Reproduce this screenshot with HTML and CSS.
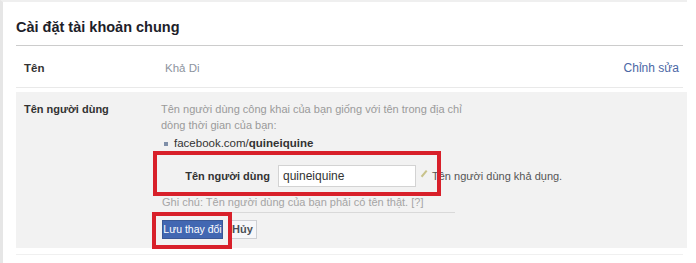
FILE: index.html
```html
<!DOCTYPE html>
<html>
<head>
    <meta charset="utf-8">
    <title>Cài đặt tài khoản chung</title>
    <link rel="stylesheet" href="styles.css">
</head>
<body>
<div class="page">
    <h2 class="title">Cài đặt tài khoản chung</h2>
    <div class="row">
        <div class="label">Tên</div>
        <div class="value">Khả Di</div>
        <a href="javascript:;" class="edit">Chỉnh sửa</a>
    </div>
    <!--đang sửa-->
    <div class="row-open">
        <div class="label">Tên người dùng</div>
        <div class="content">
            <p class="desc">Tên người dùng công khai của bạn giống với tên trong địa chỉ dòng thời gian của bạn:</p>
            <ul class="url">
                <li>facebook.com/<b>quineiquine</b></li>
            </ul>
            <div class="field">
                <label>Tên người dùng</label>
                <input type="text" value="quineiquine">
                <span class="ok"><i class="pen"></i>Tên người dùng khả dụng.</span>
            </div>
            <p class="note">Ghi chú: Tên người dùng của bạn phải có tên thật. [?]</p>
            <div class="btns">
                <a href="javascript:;" class="save">Lưu thay đổi</a>
                <a href="javascript:;" class="cancel">Hủy</a>
            </div>
        </div>
        <div class="mark mark1"></div>
        <div class="mark mark2"></div>
    </div>
    <div class="bottom"></div>
</div>
</body>
</html>
```

FILE: styles.css
```css
html,body,h2,div,p,ul,li{padding:0; margin:0; border:0;}
ul{list-style:none;}
body{background:#fff; font-family:"Liberation Sans", Arial, Helvetica, sans-serif; font-size:11px; color:#333;}
a{text-decoration:none;}

.page{
    height:263px;
    box-sizing:border-box;
    border-left:3px solid #e6e6e6;
    border-top:2px solid #efefef;
    padding-left:13px;
    width:687px;
}
.title{
    font-size:14.5px;
    font-weight:bold;
    color:#1d2129;
    height:44px;
    line-height:32px;
    border-bottom:1px solid #ccc;
    margin-right:4px;
    box-sizing:border-box;
    padding-top:9px;
}
.row{
    display:flex;
    align-items:center;
    height:42px;
    padding:3px 4px 0 8px;
    box-sizing:border-box;
    border-bottom:1px solid #e9e9e9;
    margin-right:4px;
    font-size:11.5px;
}
.label{
    width:141px;
    font-weight:bold;
    color:#333;
}
.row .value{
    flex:1;
    color:#8d949e;
}
.edit{
    color:#4b67a5;
    font-size:12px;
}
.row-open{
    position:relative;
    display:flex;
    margin-top:4px;
    background:#f2f2f2;
    padding:9px 0 0 8px;
    height:156px;
    box-sizing:border-box;
}
.row-open .label{
    width:137px;
    line-height:16px;
}
.content{
    flex:1;
}
.desc{
    color:#9a9a9a;
    line-height:16px;
    width:310px;
}
.url{
    margin-top:2px;
    line-height:16px;
    font-size:11.5px;
}
.url li{
    padding-left:13px;
    position:relative;
    color:#333;
}
.url li:before{
    content:"";
    position:absolute;
    left:3px;
    top:7px;
    width:4px;
    height:4px;
    background:#7f8fa8;
}
.field{
    display:flex;
    align-items:center;
    margin-top:14px;
    height:22px;
}
.field label{
    width:109px;
    text-align:right;
    font-weight:bold;
    color:#333;
    margin-right:8px;
}
.field input{
    width:138px;
    height:22px;
    box-sizing:border-box;
    border:1px solid #d3d3d3;
    background:#fff;
    font-family:"Liberation Sans", Arial, sans-serif;
    font-size:12px;
    color:#333;
    padding:0 4px;
    margin-right:4px;
}
.ok{
    display:flex;
    align-items:center;
    color:#555;
}
.pen{
    display:inline-block;
    width:1px;
    height:8px;
    border-left:2px solid #c8c28a;
    transform:rotate(40deg);
    margin:-5px 6px 0 3px;
}
.note{
    color:#a5a5a5;
    margin-top:8px;
    line-height:14px;
    padding-bottom:3px;
    margin-left:-6px;
    padding-left:7px;
    width:293px;
    border-bottom:1px solid #d9d9d9;
}
.btns{
    margin-top:7px;
    display:flex;
    align-items:center;
}
.btns a{
    display:inline-block;
    height:19px;
    line-height:17px;
    box-sizing:border-box;
    white-space:nowrap;
}
.save{
    width:61px;
    text-align:center;
    font-size:10.5px;
    background:#4267b2;
    color:#fff;
    border:1px solid #3a5795;
    margin-left:1px;
}
.cancel{
    margin-left:5px;
    padding:0 3px;
    font-size:11px;
    background:#f6f7f9;
    border:1px solid #ced0d4;
    color:#4b4f56;
    font-weight:bold;
}
/*khung đỏ*/
.mark{
    position:absolute;
    border:4px solid #d8202a;
    box-sizing:border-box;
}
.mark1{
    left:137px;
    top:59px;
    width:288px;
    height:45px;
}
.mark2{
    left:136px;
    top:120px;
    width:80px;
    height:37px;
}
.bottom{
    margin-top:6px;
    border-top:1px solid #f0f0f0;
    margin-right:4px;
}
```
